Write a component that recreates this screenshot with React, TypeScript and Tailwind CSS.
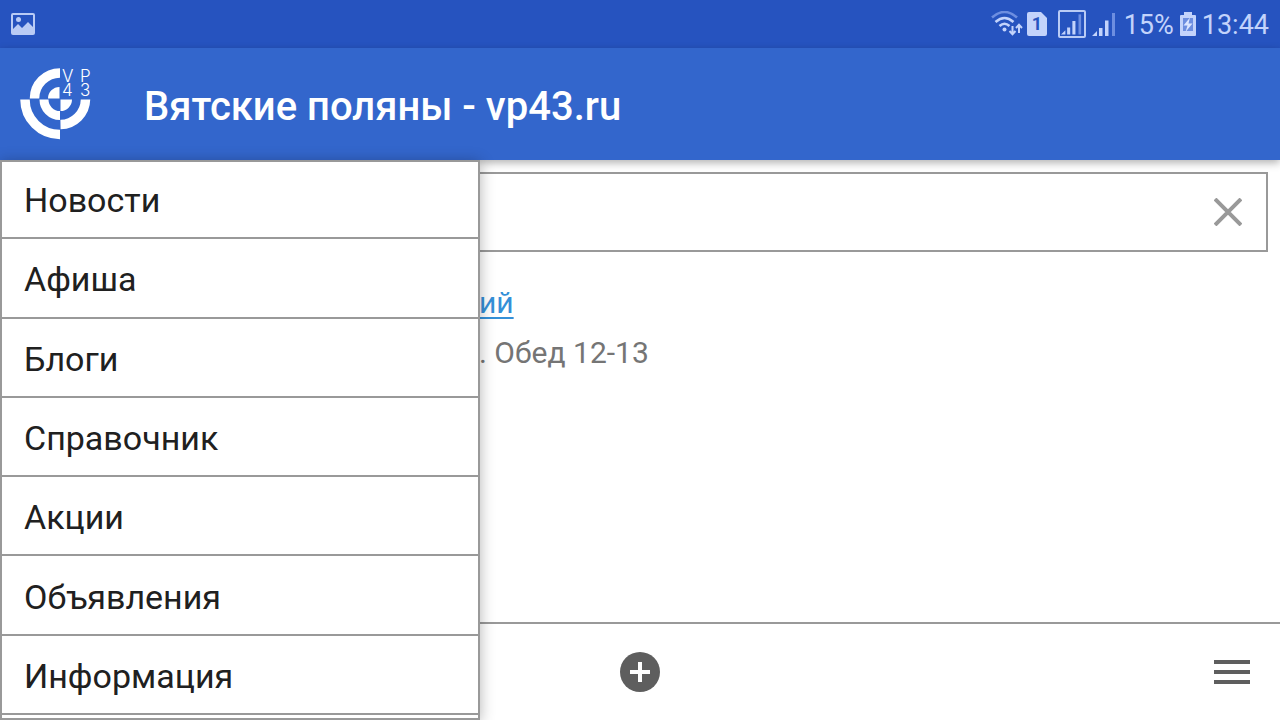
import React, { useState } from 'react';

const MENU_ITEMS = ['Новости', 'Афиша', 'Блоги', 'Справочник', 'Акции', 'Объявления', 'Информация'];

const SignalBars = () => (
  <svg viewBox="0 0 24 24" className="w-full h-full" aria-hidden="true">
    <path d="M0 24 L5 19 V24 Z M7 16 h3.500 V24 h-3.500 Z M13 8.500 h3.500 V24 h-3.500 Z" fill="#c3d3fb" />
    <path d="M20 1 h3 V24 h-3 Z" fill="#6d8ee0" />
  </svg>
);

const StatusBar = () => (
  <div className="h-12 shrink-0 flex items-center justify-between px-[11px] bg-[#2653bf] text-[#c3d3fb]">
    <svg viewBox="0 0 24 22" className="w-6 h-[22px]" aria-hidden="true">
      <rect x="1" y="1" width="22" height="20" rx="1" fill="none" stroke="#b9cbf5" strokeWidth="2" />
      <circle cx="7.5" cy="6.5" r="2.5" fill="#b9cbf5" />
      <path d="M2 16 L7 11 L11 15 L17 9 L22 14 V20 H2 Z" fill="#b9cbf5" />
    </svg>
    <div className="flex items-center">
      <svg viewBox="0 0 32 26" className="w-8 h-[26px] mr-1" fill="none" aria-hidden="true">
        <path d="M1 6.5 Q13.5 -4.5 26 6.5" stroke="#6d8ee0" strokeWidth="2.6" />
        <path d="M4.5 11 Q13.5 3 22.5 11" stroke="#c3d3fb" strokeWidth="2.6" />
        <path d="M8.5 15 Q13.5 10.5 18.5 15" stroke="#c3d3fb" strokeWidth="2.6" />
        <circle cx="13.5" cy="18.5" r="2" fill="#c3d3fb" />
        <path d="M21.5 15 V23 M18.5 20 L21.5 23.2 L24.5 20 M28 22 V14 M25 17 L28 13.8 L31 17" stroke="#c3d3fb" strokeWidth="2" />
      </svg>
      <svg viewBox="0 0 20 24" className="w-5 h-6 mr-[11px]" aria-hidden="true">
        <path d="M2 0 H14 L20 6 V22 Q20 24 18 24 H2 Q0 24 0 22 V2 Q0 0 2 0 Z" fill="#c3d3fb" />
        <text x="10" y="18" textAnchor="middle" fontSize="18" fontWeight="700" fill="#2653bf" fontFamily="Roboto, sans-serif">1</text>
      </svg>
      <div className="w-7 h-7 mr-1.5 pl-px pr-0.5 py-px border-2 rounded-xs border-[#b9cbf5]">
        <SignalBars />
      </div>
      <div className="w-6 h-6">
        <SignalBars />
      </div>
      <span className="ml-2 text-[27px] leading-8 mt-0.5">15%</span>
      <svg viewBox="0 0 16 24" className="w-4 h-6 mx-1.5" aria-hidden="true">
        <path d="M4 0 H12 V3 H15 Q16 3 16 4 V23 Q16 24 15 24 H1 Q0 24 0 23 V4 Q0 3 1 3 H4 Z" fill="#c3d3fb" />
        <rect x="3" y="6" width="10" height="13" fill="#6d8ee0" />
        <path d="M10 5.500 L3.500 13.500 H7.500 L5.500 20 L12.500 11.500 H8.500 Z" fill="#dbe5ff" />
      </svg>
      <span className="text-[27px] leading-8 mt-0.5">13:44</span>
    </div>
  </div>
);

const Logo = () => (
  <svg viewBox="-40 -31 74 72" className="w-[74px] h-[72px] overflow-visible" role="img" aria-label="VP43">
    <g fill="none" stroke="#fff" strokeWidth="9.500">
      <path d="M-25.500 -0.500 A25.500 25.500 0 0 1 0 -26" />
      <path d="M-35 0.500 A35 35 0 0 0 0 35.500" />
      <path d="M-16 0.500 A16 16 0 0 0 0 16.500" strokeWidth="9" />
      <path d="M25.500 0.500 A25.500 25.500 0 0 1 0.500 25.500" />
    </g>
    <path d="M-0.500 -0.500 V-12 A11.500 11.500 0 0 0 -12 -0.500 Z M0.500 0.500 H12 A11.500 11.500 0 0 1 0.500 12 Z" fill="#fff" />
    <g fill="#fff" fontFamily="Inter, sans-serif" fontWeight="300" fontSize="17">
      <text x="2 20" y="-17">VP</text>
      <text x="2 20" y="-3">43</text>
    </g>
  </svg>
);

export default function App() {
  const [menuOpen, setMenuOpen] = useState(true);
  const [query, setQuery] = useState('');

  return (
    <div className="h-screen flex flex-col overflow-hidden bg-white font-[Roboto,sans-serif]">
      <StatusBar />

      <header className="h-28 shrink-0 flex items-center gap-[50px] pl-5 bg-[#3366cc] shadow-[0_3px_8px_rgba(0,0,0,0.3)]">
        <Logo />
        <h1 className="text-[40px] leading-12 font-medium text-white mt-1.5">Вятские поляны - vp43.ru</h1>
      </header>

      <div className="relative flex-1 min-h-0 flex flex-col">
        <main className="flex-1 px-3 pt-3">
          <div className="flex items-center h-20 border-2 border-[#999999] pr-6">
            <input
              type="text"
              aria-label="Поиск"
              value={query}
              onChange={(e) => setQuery(e.target.value)}
              className="flex-1 h-full px-3 text-[30px] focus:outline-none"
            />
            <button type="button" aria-label="Очистить" onClick={() => setQuery('')}>
              <svg viewBox="0 0 28 28" className="w-7 h-7" aria-hidden="true">
                <path d="M1 1 L27 27 M27 1 L1 27" stroke="#999999" strokeWidth="4" />
              </svg>
            </button>
          </div>
          <div className="pl-[467px] pt-[26px] text-[30px] leading-[50px]">
            <a href="#" className="block w-fit text-[#3490d8] underline underline-offset-4 decoration-2">ий</a>
            <p className="text-[#757575]">. Обед 12-13</p>
          </div>
        </main>

        <footer className="h-[98px] grid grid-cols-3 items-center border-t-2 border-[#999999]">
          <button type="button" aria-label="Добавить" className="col-start-2 justify-self-center">
            <svg viewBox="0 0 40 40" className="w-10 h-10" aria-hidden="true">
              <circle cx="20" cy="20" r="20" fill="#5e5e5e" />
              <path d="M20 10 V30 M10 20 H30" stroke="#fff" strokeWidth="4" />
            </svg>
          </button>
          <button type="button" aria-label="Меню" className="justify-self-end mr-[30px]" onClick={() => setMenuOpen(!menuOpen)}>
            <svg viewBox="0 0 36 24" className="w-9 h-6" aria-hidden="true">
              <path d="M0 2 H36 M0 12 H36 M0 22 H36" stroke="#5e5e5e" strokeWidth="4" />
            </svg>
          </button>
        </footer>

        {menuOpen && (
          <nav className="absolute left-0 inset-y-0 w-[480px] flex flex-col pb-[3px] bg-white border-x-2 border-b-2 border-[#999999] shadow-[0_2px_14px_rgba(0,0,0,0.3)]">
            <ul className="flex-1 grid auto-rows-fr">
              {MENU_ITEMS.map((item) => (
                <li key={item} className="flex pt-[3px] first:pt-0 border-b-2 first:border-t-2 border-[#999999]">
                  <a href="#" className="flex-1 flex items-center pl-[22px] text-[34px] leading-10 text-[#202020]">{item}</a>
                </li>
              ))}
            </ul>
          </nav>
        )}
      </div>
    </div>
  );
}
